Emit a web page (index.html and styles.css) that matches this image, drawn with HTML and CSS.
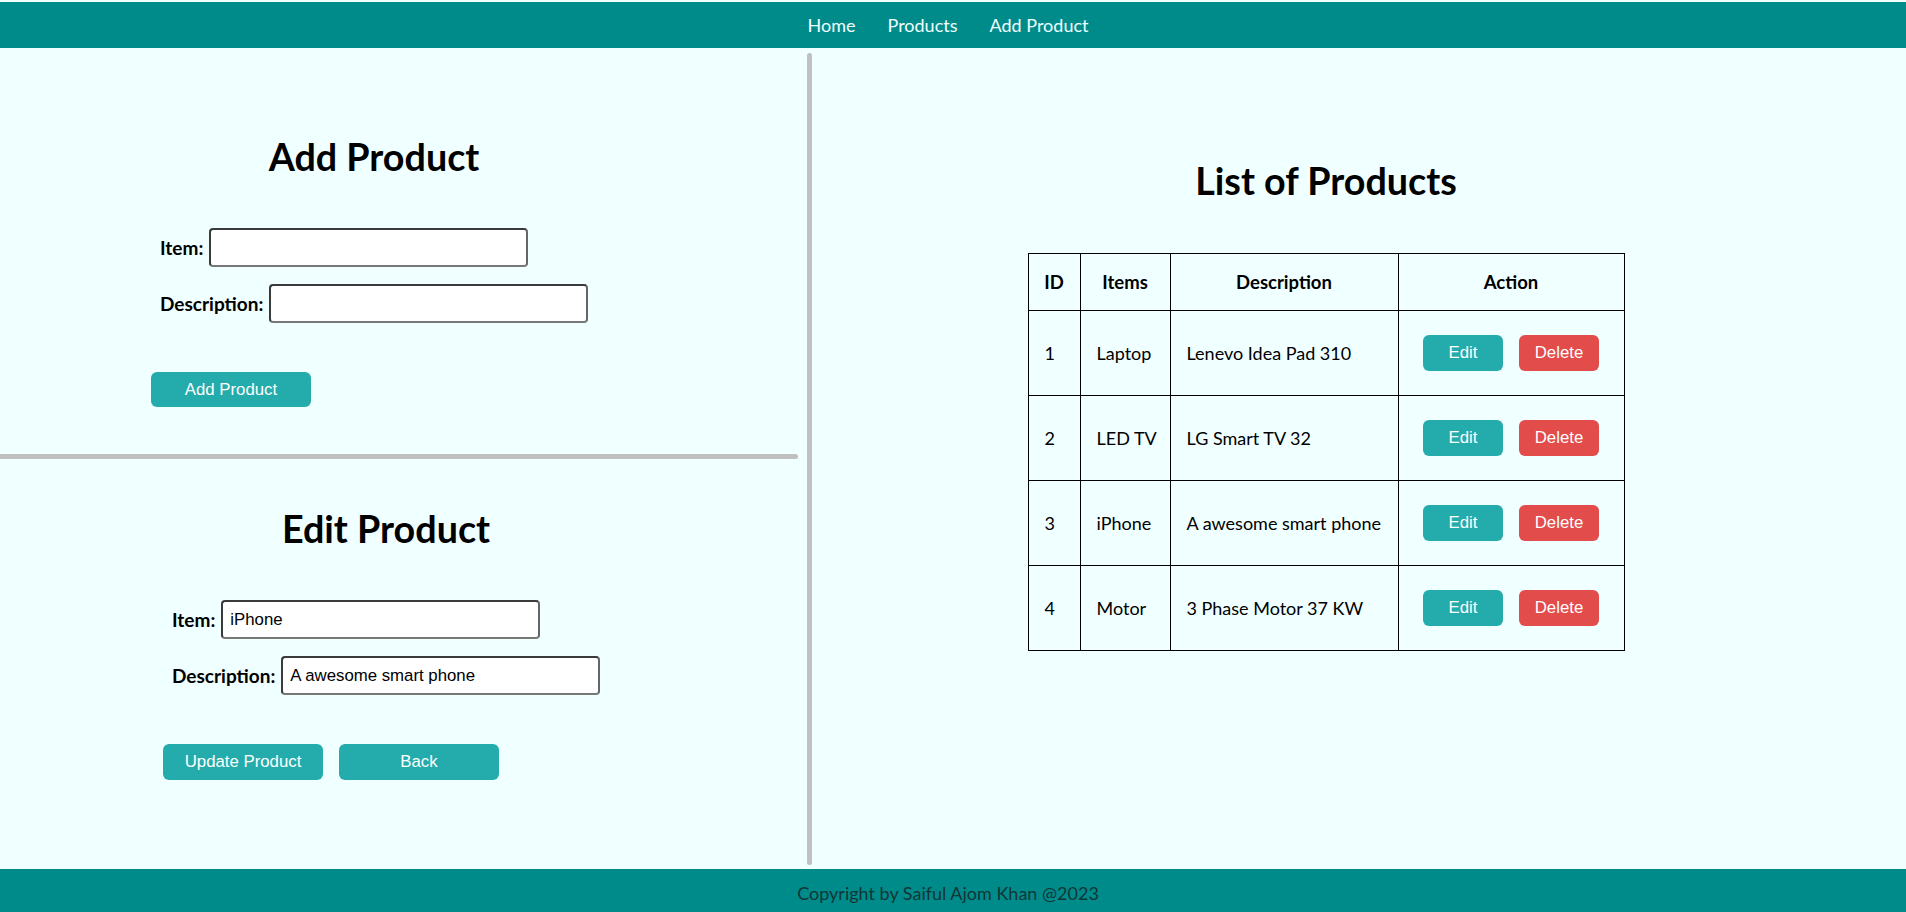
FILE: index.html
```html
<!DOCTYPE html>
<html lang="en">
<head>
<meta charset="utf-8">
<title>Products</title>
<link rel="stylesheet" href="styles.css">
</head>
<body>
<header class="topbar">
  <nav class="nav">
    <a class="nav-link" href="#">Home</a>
    <a class="nav-link" href="#">Products</a>
    <a class="nav-link" href="#">Add Product</a>
  </nav>
</header>

<main class="main">
  <section class="left-col">
    <div class="add-section">
      <form class="form-box">
        <h1 class="title">Add Product</h1>
        <div class="field">
          <label class="label">Item:</label>
          <input class="input" type="text" value="">
        </div>
        <div class="field">
          <label class="label">Description:</label>
          <input class="input" type="text" value="">
        </div>
        <div class="actions actions-add">
          <button type="button" class="btn btn-teal btn-wide btn-short">Add Product</button>
        </div>
      </form>
    </div>
    <div class="hsep"></div>
    <div class="edit-section">
      <form class="form-box">
        <h1 class="title">Edit Product</h1>
        <div class="field">
          <label class="label">Item:</label>
          <input class="input" type="text" value="iPhone">
        </div>
        <div class="field">
          <label class="label">Description:</label>
          <input class="input" type="text" value="A awesome smart phone">
        </div>
        <div class="actions actions-edit">
          <button type="button" class="btn btn-teal btn-wide">Update Product</button>
          <button type="button" class="btn btn-teal btn-wide">Back</button>
        </div>
      </form>
    </div>
  </section>

  <div class="vsep"></div>

  <section class="right-col">
    <h1 class="title list-title">List of Products</h1>
    <table class="ptable">
      <colgroup>
        <col class="c-id"><col class="c-item"><col class="c-desc"><col class="c-act">
      </colgroup>
      <thead>
        <tr><th>ID</th><th>Items</th><th>Description</th><th>Action</th></tr>
      </thead>
      <tbody>
        <tr><td>1</td><td>Laptop</td><td>Lenevo Idea Pad 310</td><td class="act"><button type="button" class="btn btn-teal btn-sm">Edit</button><button type="button" class="btn btn-red btn-sm">Delete</button></td></tr>
        <tr><td>2</td><td>LED TV</td><td>LG Smart TV 32</td><td class="act"><button type="button" class="btn btn-teal btn-sm">Edit</button><button type="button" class="btn btn-red btn-sm">Delete</button></td></tr>
        <tr><td>3</td><td>iPhone</td><td>A awesome smart phone</td><td class="act"><button type="button" class="btn btn-teal btn-sm">Edit</button><button type="button" class="btn btn-red btn-sm">Delete</button></td></tr>
        <tr><td>4</td><td>Motor</td><td>3 Phase Motor 37 KW</td><td class="act"><button type="button" class="btn btn-teal btn-sm">Edit</button><button type="button" class="btn btn-red btn-sm">Delete</button></td></tr>
      </tbody>
    </table>
  </section>
</main>

<footer class="footer">
  <p class="copy">Copyright by Saiful Ajom Khan @2023</p>
</footer>
</body>
</html>
```
FILE: styles.css
```css
html, body {
  margin: 0;
  padding: 0;
  background: #f0ffff;
}
body {
  font-family: "Lato", "Open Sans", sans-serif;
  color: #000;
  padding-top: 2px;
}

/* header */
.topbar {
  height: 46px;
  background: #008b8b;
  display: flex;
  align-items: center;
  justify-content: center;
  padding-right: 10px;
}
.nav {
  display: flex;
  gap: 32px;
}
.nav-link {
  color: #f0ffff;
  text-decoration: none;
  font-size: 18px;
  line-height: 22px;
}

/* main area */
.main {
  height: 821px;
  display: flex;
}
.left-col {
  width: 798px;
  flex: none;
  display: flex;
  flex-direction: column;
}
.add-section {
  height: 406px;
  padding-left: 151px;
  padding-top: 86px;
  box-sizing: border-box;
}
.edit-section {
  padding-left: 163px;
  padding-top: 47px;
}
.hsep {
  height: 5px;
  background: #c0c0c0;
  border-radius: 0 3px 3px 0;
}
.vsep {
  width: 5px;
  flex: none;
  margin: 5px 0 4px 9px;
  background: #c0c0c0;
  border-radius: 3px;
}
.right-col {
  flex: 1;
  display: flex;
  flex-direction: column;
  align-items: center;
  padding-top: 110px;
  padding-right: 66px;
}

/* forms */
.form-box {
  width: 446px;
  margin: 0;
}
.title {
  margin: 0;
  font-size: 37.7px;
  line-height: 46px;
  font-weight: 700;
  text-align: center;
}
.field {
  display: flex;
  align-items: center;
  gap: 6px;
  padding-left: 9px;
  margin-top: 17px;
}
.add-section .title + .field {
  margin-top: 48px;
}
.edit-section .title + .field {
  margin-top: 48px;
}
.label {
  font-size: 19px;
  font-weight: 700;
  line-height: 22px;
}
.input {
  width: 319px;
  height: 39px;
  box-sizing: border-box;
  border: 2px solid #3a3a3a;
  border-bottom-color: #777;
  border-right-color: #666;
  border-radius: 4px;
  background: #fff;
  padding: 0 7px;
  font-family: "Liberation Sans", Arial, sans-serif;
  font-size: 16.8px;
  color: #000;
  outline: none;
}
.actions {
  display: flex;
  gap: 16px;
}
.actions-add {
  margin-top: 49px;
}
.actions-edit {
  margin-top: 49px;
}

/* buttons */
.btn {
  border: none;
  border-radius: 6px;
  color: #fff;
  font-family: "Liberation Sans", Arial, sans-serif;
  font-size: 16.8px;
  padding: 0;
  cursor: pointer;
}
.btn-teal {
  background: #24abab;
}
.btn-red {
  background: #e24c4b;
}
.btn-wide {
  width: 160px;
  height: 36px;
}
.btn-short {
  height: 35px;
}
.btn-sm {
  width: 80px;
  height: 36px;
}

/* table */
.list-title {
  margin-bottom: 49px;
}
.ptable {
  width: 596px;
  table-layout: fixed;
  border-collapse: collapse;
  font-size: 18px;
}
.c-id { width: 52px; }
.c-item { width: 90px; }
.c-desc { width: 228px; }
.c-act { width: 226px; }
.ptable th,
.ptable td {
  border: 1px solid #000;
  padding: 0 0 0 16px;
  vertical-align: middle;
  line-height: 22px;
}
.ptable th {
  height: 56px;
  font-weight: 700;
  font-size: 18.5px;
  text-align: center;
  padding: 0;
}
.ptable td {
  height: 84px;
  text-align: left;
  white-space: nowrap;
}
.ptable td.act {
  padding: 0;
  text-align: center;
}
.act .btn + .btn {
  margin-left: 16px;
}

/* footer */
.footer {
  height: 43px;
  background: #008b8b;
  display: flex;
  align-items: center;
  justify-content: center;
  padding-right: 10px;
  padding-top: 4px;
  box-sizing: border-box;
}
.copy {
  margin: 0;
  color: #123636;
  font-size: 18px;
  line-height: 22px;
}
```
